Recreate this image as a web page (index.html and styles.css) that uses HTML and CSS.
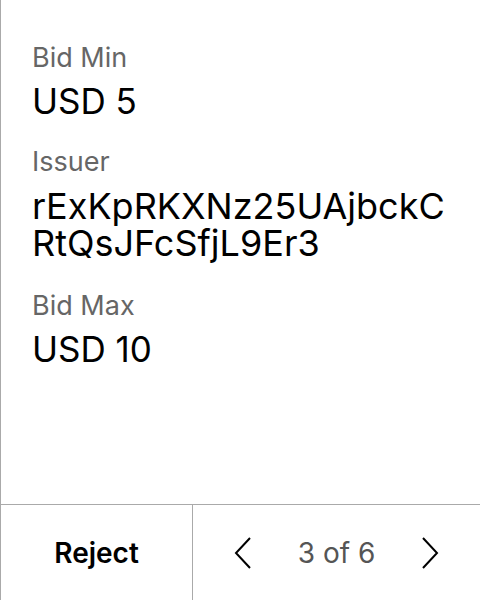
FILE: index.html
```html
<!DOCTYPE html>
<html>
<head>
<meta charset="utf-8">
<link rel="stylesheet" href="styles.css">
</head>
<body>
<div class="panel">
  <div class="content">
    <div class="field">
      <div class="label">Bid Min</div>
      <div class="value">USD 5</div>
    </div>
    <div class="field">
      <div class="label">Issuer</div>
      <div class="value address">
        <div class="line">rExKpRKXNz25UAjbckC</div>
        <div class="line">RtQsJFcSfjL9Er3</div>
      </div>
    </div>
    <div class="field">
      <div class="label">Bid Max</div>
      <div class="value">USD 10</div>
    </div>
  </div>
  <div class="footer">
    <div class="reject">Reject</div>
    <div class="pager">
      <svg class="chev" width="18" height="32" viewBox="0 0 18 32"><polyline points="16,1 2,16 16,31" fill="none" stroke="#000" stroke-width="2"/></svg>
      <span class="count">3 of 6</span>
      <svg class="chev" width="18" height="32" viewBox="0 0 18 32"><polyline points="2,1 16,16 2,31" fill="none" stroke="#000" stroke-width="2"/></svg>
    </div>
  </div>
</div>
</body>
</html>
```

FILE: styles.css
```css
html, body {
  margin: 0;
  padding: 0;
  background: #fff;
}
body {
  font-family: Inter, "Noto Sans", sans-serif;
  color: #000;
}
.panel {
  width: 480px;
  height: 600px;
  box-sizing: border-box;
  border-left: 1px solid #aaa;
  display: flex;
  flex-direction: column;
}
.content {
  flex: 1;
  padding: 43px 10px 0 31px;
  display: flex;
  flex-direction: column;
  gap: 27px;
}
.label {
  font-size: 27px;
  line-height: 30px;
  color: #666;
}
.value {
  font-size: 35px;
  line-height: 38px;
  margin-top: 9px;
}
.value.address {
  font-size: 36px;
  margin-top: 11px;
  margin-bottom: 2px;
  display: flex;
  flex-direction: column;
}
.value.address .line {
  height: 37px;
  line-height: 37px;
  white-space: nowrap;
}
.footer {
  height: 96px;
  box-sizing: border-box;
  border-top: 1px solid #aaa;
  display: flex;
}
.reject {
  width: 191px;
  border-right: 1px solid #aaa;
  display: flex;
  align-items: center;
  justify-content: center;
  font-size: 28px;
  font-weight: 600;
}
.pager {
  flex: 1;
  display: flex;
  align-items: center;
  justify-content: center;
  gap: 46px;
}
.count {
  font-size: 28px;
  color: #555;
}
.chev {
  display: block;
}
```
